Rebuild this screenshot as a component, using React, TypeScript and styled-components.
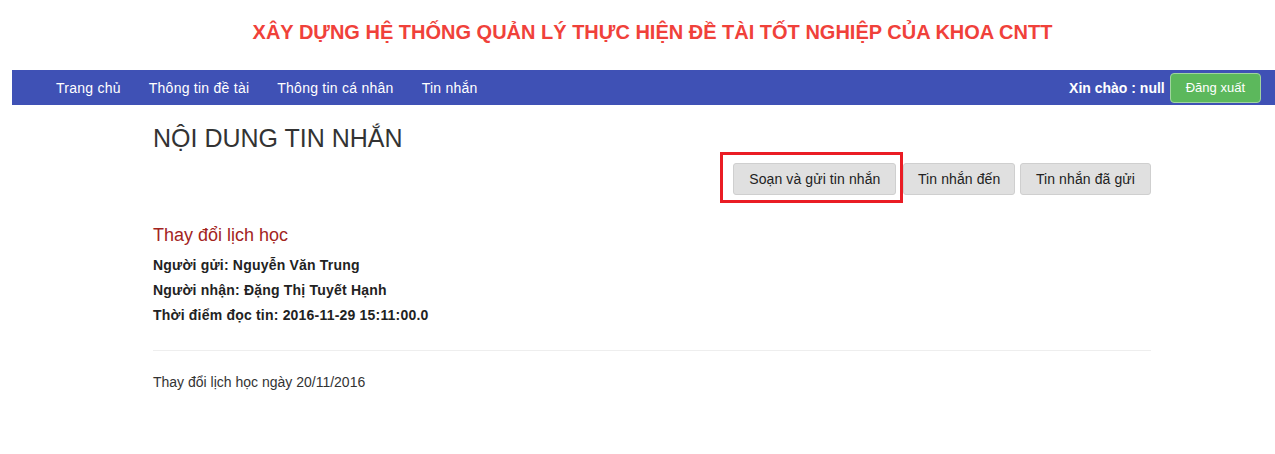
import styled, { createGlobalStyle } from "styled-components";

const GlobalStyle = createGlobalStyle`
  body {
    margin: 0;
    background: #ffffff;
    font-family: "Liberation Sans", Arial, sans-serif;
    font-size: 14px;
    color: #333333;
  }
`;

const Page = styled.div`
  width: 1275px;
`;

// header title //
const SiteTitle = styled.h1`
  margin: 0;
  padding: 20px 0 0 30px;
  height: 50px;
  text-align: center;
  font-size: 20px;
  font-weight: 700;
  line-height: 24px;
  color: #f0413a;
`;

// navbar //
const NavBar = styled.nav`
  margin-left: 12px;
  height: 35px;
  background: #3f51b5;
  display: flex;
  align-items: center;
  padding: 0 14px 0 30px;
`;
const NavLinks = styled.div`
  display: flex;
  flex: 1;
`;
const NavLink = styled.a`
  color: #ffffff;
  font-size: 14px;
  padding: 1px 14px 0;
  line-height: 35px;
  letter-spacing: 0.25px;
  text-decoration: none;
  cursor: pointer;
`;
const NavRight = styled.div`
  display: flex;
  align-items: center;
  gap: 5px;
`;
const Greeting = styled.span`
  color: #ffffff;
  font-weight: 700;
  font-size: 14px;
`;
const LogoutButton = styled.button`
  height: 30px;
  padding: 0 15px;
  background: #5cb85c;
  border: 1px solid #9fd49f;
  border-radius: 4px;
  color: #ffffff;
  font-family: inherit;
  font-size: 13px;
`;

// content //
const Content = styled.div`
  margin-left: 153px;
  width: 998px;
`;
const PageHeading = styled.h3`
  margin: 0;
  padding-top: 18px;
  font-size: 25px;
  font-weight: 400;
  line-height: 30px;
  color: #333333;
`;
const ButtonBar = styled.div`
  display: flex;
  justify-content: flex-end;
  gap: 5px;
  margin-top: 10px;
`;
const Highlight = styled.div`
  position: relative;
  margin-right: 2px;
`;
const HighlightFrame = styled.div`
  position: absolute;
  left: -13px;
  right: -7px;
  top: -11px;
  bottom: -8px;
  border: 3px solid #ea1c24;
  pointer-events: none;
`;
const TabButton = styled.button<{ $padX?: number }>`
  height: 32px;
  padding: 0 ${(p) => p.$padX ?? 15}px;
  background: #e0e0e0;
  border: 1px solid #cfcfcf;
  border-radius: 3px;
  color: #222222;
  font-family: inherit;
  font-size: 14px;
  letter-spacing: 0.1px;
`;

const Subject = styled.div`
  margin-top: 29px;
  font-size: 18px;
  line-height: 22px;
  color: #a3241e;
`;
const MetaList = styled.div`
  margin-top: 7px;
  display: flex;
  flex-direction: column;
`;
const MetaLine = styled.div`
  font-weight: 700;
  font-size: 14px;
  line-height: 25px;
  letter-spacing: 0.2px;
  color: #222222;
`;
const Divider = styled.hr`
  margin: 22px 0 0 0;
  border: 0;
  border-top: 1px solid #eeeeee;
`;
const Body = styled.p`
  margin: 21px 0 0 0;
  font-size: 14px;
  line-height: 20px;
  color: #333333;
`;

const App = () => {
  return (
    <Page>
      <GlobalStyle />
      <SiteTitle>
        XÂY DỰNG HỆ THỐNG QUẢN LÝ THỰC HIỆN ĐỀ TÀI TỐT NGHIỆP CỦA KHOA CNTT
      </SiteTitle>
      <NavBar>
        <NavLinks>
          <NavLink>Trang chủ</NavLink>
          <NavLink>Thông tin đề tài</NavLink>
          <NavLink>Thông tin cá nhân</NavLink>
          <NavLink>Tin nhắn</NavLink>
        </NavLinks>
        <NavRight>
          <Greeting>Xin chào : null</Greeting>
          <LogoutButton>Đăng xuất</LogoutButton>
        </NavRight>
      </NavBar>
      <Content>
        <PageHeading>NỘI DUNG TIN NHẮN</PageHeading>
        <ButtonBar>
          <Highlight>
            <TabButton>Soạn và gửi tin nhắn</TabButton>
            <HighlightFrame />
          </Highlight>
          <TabButton $padX={13.5}>Tin nhắn đến</TabButton>
          <TabButton>Tin nhắn đã gửi</TabButton>
        </ButtonBar>
        <Subject>Thay đổi lịch học</Subject>
        <MetaList>
          <MetaLine>Người gửi: Nguyễn Văn Trung</MetaLine>
          <MetaLine>Người nhận: Đặng Thị Tuyết Hạnh</MetaLine>
          <MetaLine>Thời điểm đọc tin: 2016-11-29 15:11:00.0</MetaLine>
        </MetaList>
        <Divider />
        <Body>Thay đổi lịch học ngày 20/11/2016</Body>
      </Content>
    </Page>
  );
};

export default App;
